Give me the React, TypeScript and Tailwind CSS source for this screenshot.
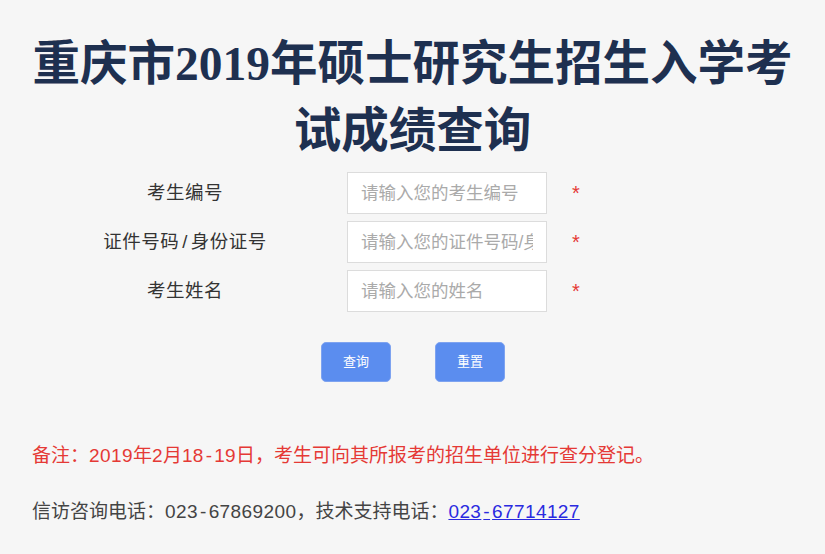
import React from "react";

const rows = [
  { label: ["考生编号"], placeholder: "请输入您的考生编号" },
  { label: ["证件号码", "身份证号"], placeholder: "请输入您的证件号码/身份证号" },
  { label: ["考生姓名"], placeholder: "请输入您的姓名" },
];

// digits in the reference are a bit wider and the hyphen reads like a dash
function Num({ v }: { v: string }) {
  const [a, b] = v.split("-");
  return (
    <span className="tracking-[0.4px]">
      {a}
      <span className="mx-[2px]">-</span>
      {b}
    </span>
  );
}

export default function App() {
  return (
    <div
      className="min-h-[554px] w-[825px] bg-[#f6f6f6] text-[#333]"
      style={{ fontFamily: '"Liberation Sans", "Noto Sans CJK SC", sans-serif' }}
    >
      {/* title */}
      <h1
        className="pt-[31px] text-center text-[47.5px] font-bold leading-[67px] text-[#1e3050]"
        style={{ fontFamily: '"Liberation Serif", "Noto Sans CJK SC", serif' }}
      >
        重庆市2019年硕士研究生招生入学考
        <br />
        试成绩查询
      </h1>

      {/* form */}
      <div className="mt-[7px] flex flex-col gap-[7px]">
        {rows.map((r) => (
          <div key={r.placeholder} className="flex items-center">
            <label className="ml-[35px] w-[300px] text-center text-[18.5px] tracking-[0.5px] text-[#333]">
              {r.label[0]}
              {r.label[1] && (
                <>
                  <span className="mx-[3px]">/</span>
                  {r.label[1]}
                </>
              )}
            </label>
            <input
              className="ml-[12px] h-[42px] w-[200px] border border-[#dcdcdc] bg-white px-[13px] text-[17.5px] outline-none placeholder:text-[#aaa]"
              placeholder={r.placeholder}
            />
            <span className="ml-[25px] text-[20px] leading-none text-[#e53935]">*</span>
          </div>
        ))}
      </div>

      {/* buttons */}
      <div className="mt-[30px] flex gap-[44px] pl-[321px]">
        <button className="h-[40px] w-[70px] rounded-[5px] border border-[#7ea3f0] bg-[#5b8def] text-[13px] text-white">
          查询
        </button>
        <button className="h-[40px] w-[70px] rounded-[5px] border border-[#7ea3f0] bg-[#5b8def] text-[13px] text-white">
          重置
        </button>
      </div>

      {/* notes */}
      <p className="mt-[61px] pl-[32px] text-[19px] leading-[26px] text-[#e53935]">
        备注：<span className="tracking-[0.4px]">2019</span>年<span className="tracking-[0.4px]">2</span>月
        <span className="tracking-[0.4px]">18</span>
        <span className="mx-[2px]">-</span>
        <span className="tracking-[0.4px]">19</span>日，考生可向其所报考的招生单位进行查分登记。
      </p>
      <p className="mt-[30px] pl-[32px] text-[19px] leading-[26px] text-[#444]">
        信访咨询电话：<Num v="023-67869200" />，技术支持电话：
        <a href="#" className="text-[#2a2ae0] underline">
          <Num v="023-67714127" />
        </a>
      </p>
    </div>
  );
}
